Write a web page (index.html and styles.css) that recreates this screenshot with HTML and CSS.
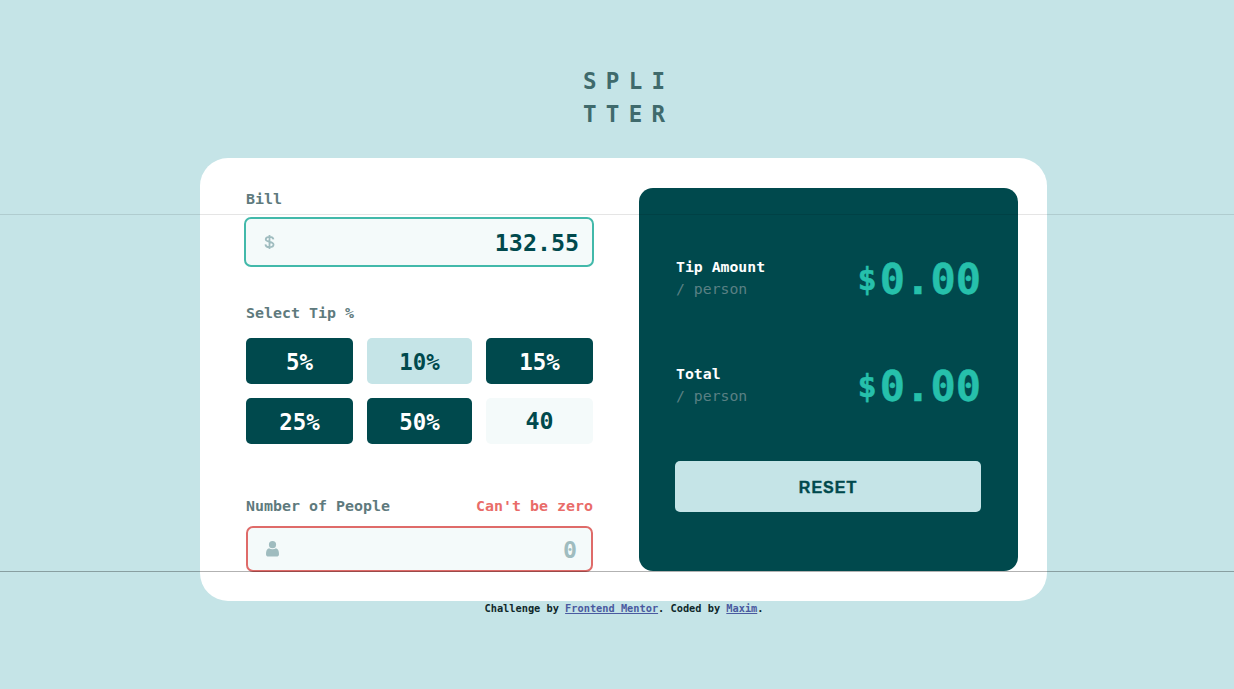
FILE: index.html
```html
<!DOCTYPE html>
<html lang="en">
<head>
<meta charset="utf-8">
<title>Splitter</title>
<link rel="stylesheet" href="styles.css">
</head>
<body>
<h1 class="logo"><span>SPLI</span><span>TTER</span></h1>
<main class="card">
  <section class="form">
    <div class="label">Bill</div>
    <div class="field field-active">
      <svg class="dollar" viewBox="0 0 11 17"><path d="M5.500 1V16M9.700 5.700C9.500 3.900 7.800 3 5.500 3 3.100 3 1.500 4 1.500 5.600 1.500 9.300 9.800 7.300 9.800 11.200 9.800 13 8.100 14 5.500 14 2.900 14 1.300 12.900 1.200 11"/></svg>
      <span class="value">132.55</span>
    </div>
    <div class="label tip-label">Select Tip %</div>
    <div class="tips">
      <button class="tip">5%</button>
      <button class="tip selected">10%</button>
      <button class="tip">15%</button>
      <button class="tip">25%</button>
      <button class="tip">50%</button>
      <div class="tip custom">40</div>
    </div>
    <div class="label people-label"><span>Number of People</span><span class="error">Can't be zero</span></div>
    <div class="field field-error">
      <svg class="person" viewBox="0 0 13 16"><circle cx="6.500" cy="3.700" r="3.600"/><path d="M3 7.200C4.900 8.700 8.100 8.700 10 7.200 12.200 7.800 13 10 13 13.200 13 14.800 12 15.600 10.500 15.600H2.500C1 15.600 0 14.800 0 13.200 0 10 .8 7.800 3 7.200Z"/></svg>
      <span class="value muted">0</span>
    </div>
  </section>
  <section class="panel">
    <div class="result">
      <div class="caption">Tip Amount<span>/ person</span></div>
      <div class="amount"><span class="sign">$</span><span>0.00</span></div>
    </div>
    <div class="result">
      <div class="caption">Total<span>/ person</span></div>
      <div class="amount"><span class="sign">$</span><span>0.00</span></div>
    </div>
    <button class="reset">RESET</button>
  </section>
</main>
<footer class="credit">Challenge by <a href="#">Frontend Mentor</a>. Coded by <a href="#">Maxim</a>.</footer>
<div class="rule rule-top"></div>
<div class="rule rule-bottom"></div>
</body>
</html>
```
FILE: styles.css
```css
* { box-sizing: border-box; }
body {
  margin: 0;
  height: 689px;
  overflow: hidden;
  position: relative;
  background: #c5e4e7;
  font-family: "DejaVu Sans Mono", "Liberation Mono", monospace;
  font-weight: 700;
  color: #00494d;
}
button { border: 0; padding: 0; font: inherit; }
.logo {
  margin: 0 0 0 583px;
  padding-top: 65px;
  height: 158px;
  font-size: 22.5px;
  line-height: 33px;
  letter-spacing: 9.3px;
  color: #3f6a6c;
}
.logo span { display: block; }
.card {
  width: 847px;
  height: 443px;
  margin-left: 200px;
  padding: 30px 29px 30px 46px;
  display: grid;
  grid-template-columns: 347px 379px;
  column-gap: 46px;
  background: #fff;
  border-radius: 28px;
}
.label {
  display: flex;
  justify-content: space-between;
  font-size: 14.95px;
  line-height: 22px;
  color: #5e7a7d;
}
.error { color: #e96c69; }
.field {
  display: flex;
  align-items: center;
  justify-content: space-between;
  background: #f4fafa;
  border: 2px solid;
  border-radius: 7px;
}
.field-active {
  margin: 7px -1px 0 -2px;
  height: 50px;
  padding: 0 13px 0 18px;
  border-color: #42b9aa;
}
.field-error {
  margin-top: 9px;
  height: 46px;
  padding: 0 14px 0 18px;
  border-color: #df6b69;
}
.dollar { width: 11px; height: 16px; fill: none; stroke: #9fbcbf; stroke-width: 1.9; }
.person { width: 13px; height: 16px; fill: #9fbcbf; }
.value { font-size: 23.3px; line-height: 34px; padding-top: 1px; }
.muted { color: #9fbcbf; }
.tip-label { margin-top: 35px; }
.tips {
  margin-top: 14px;
  display: grid;
  grid-template-columns: 107px 105px 107px;
  grid-auto-rows: 46px;
  gap: 14px;
}
.tip {
  display: flex;
  align-items: center;
  justify-content: center;
  padding-top: 2px;
  border-radius: 5px;
  background: #00494d;
  color: #fff;
  font-size: 22.4px;
}
.selected { background: #c5e4e7; color: #00494d; }
.custom { padding: 0 0 2px; background: #f4fafa; color: #00494d; font-size: 23.3px; }
.people-label { margin-top: 51px; }
.panel {
  height: 383px;
  padding: 68px 37px 0 37px;
  border-radius: 14px;
  background: #00494d;
}
.result {
  height: 107px;
  display: flex;
  justify-content: space-between;
}
.caption { font-size: 14.8px; line-height: 22px; color: #fff; }
.caption span { display: block; font-weight: 400; color: #5a8084; }
.amount {
  display: flex;
  align-items: center;
  height: 46px;
  font-size: 42px;
  color: #26c0ab;
  -webkit-text-stroke: .4px #26c0ab;
}
.sign { font-size: 32px; margin-right: 3px; }
.reset {
  display: block;
  width: 306px;
  height: 51px;
  margin: -9px 0 0 -1px;
  padding-top: 2px;
  border-radius: 5px;
  background: #c5e4e7;
  color: #00494d;
  font: 700 16px "Liberation Sans", sans-serif;
  letter-spacing: 1px;
  -webkit-text-stroke: .4px #00494d;
}
.credit {
  padding-left: 14px;
  text-align: center;
  font-size: 10.3px;
  line-height: 15px;
  color: #10282a;
}
.credit a { color: #4a5aa0; }
.rule { position: absolute; left: 0; right: 0; height: 1px; }
.rule-top { top: 214px; background: rgba(0, 0, 0, .1); }
.rule-bottom { top: 571px; background: rgba(0, 0, 0, .3); }
```
